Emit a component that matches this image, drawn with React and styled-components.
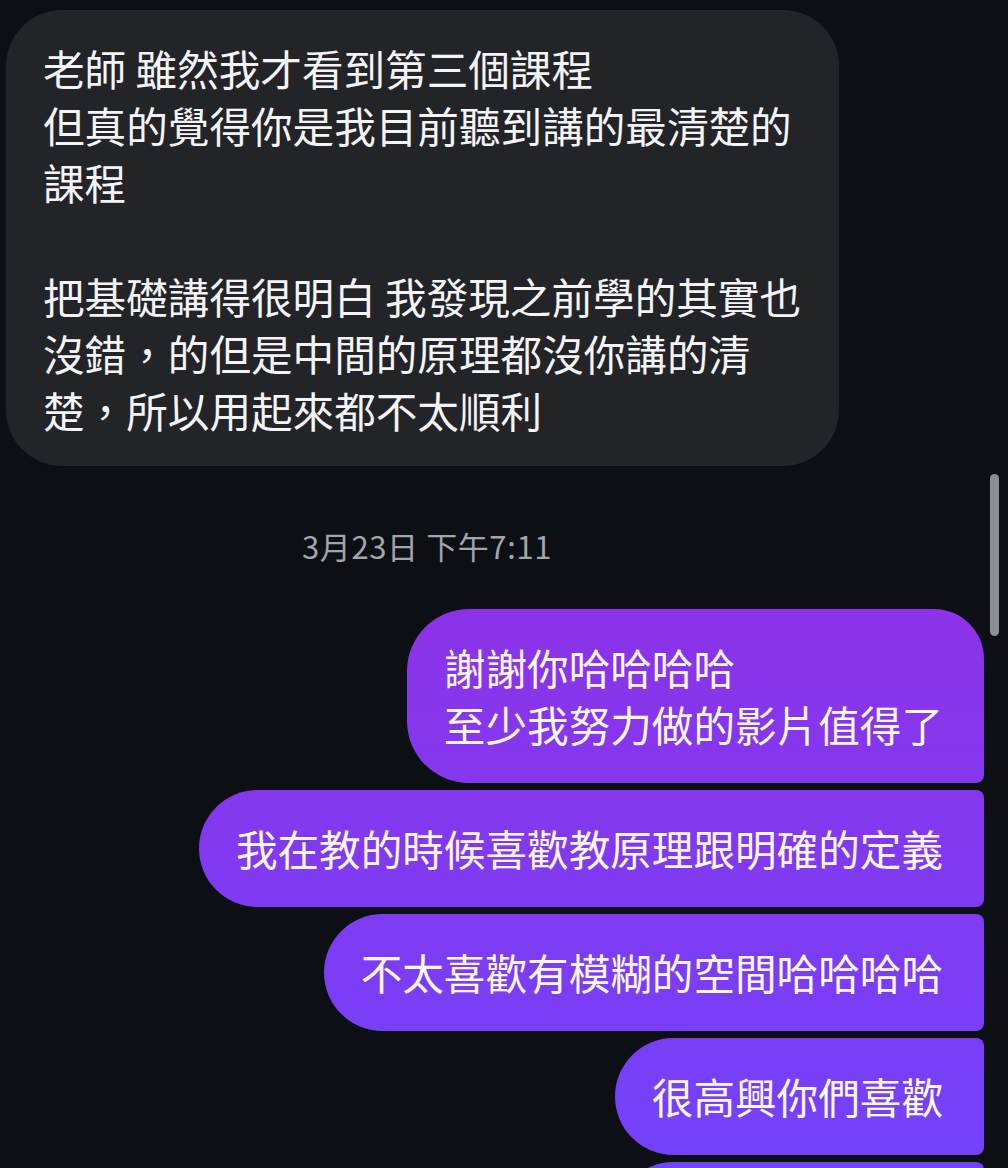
import styled, { createGlobalStyle } from 'styled-components';

const GlobalStyle = createGlobalStyle`
  html, body {
    margin: 0;
    padding: 0;
    background: #0c0f14;
    height: 1168px;
    overflow: hidden;
  }
  body {
    font-family: "Noto Sans CJK TC", "Noto Sans", sans-serif;
  }
`;

const incoming = [
  '老師 雖然我才看到第三個課程\n但真的覺得你是我目前聽到講的最清楚的\n課程\n\n把基礎講得很明白 我發現之前學的其實也\n沒錯，的但是中間的原理都沒你講的清\n楚，所以用起來都不太順利',
];

const outgoing = [
  {text: '謝謝你哈哈哈哈\n至少我努力做的影片值得了', first: true},
  {text: '我在教的時候喜歡教原理跟明確的定義'},
  {text: '不太喜歡有模糊的空間哈哈哈哈'},
  {text: '很高興你們喜歡'},
  {text: '我會繼續努力的'},
];

const App = () => {
  return (
    <Screen>
      <GlobalStyle />
      <Thread>
        {incoming.map((msg, i) => (
          <Received key={i}>{msg}</Received>
        ))}
        <Timestamp>3月23日 下午7:11</Timestamp>
        <SentGroup>
          {outgoing.map((msg, i) => (
            <Sent key={i} $first={msg.first}>{msg.text}</Sent>
          ))}
        </SentGroup>
      </Thread>
      <ScrollThumb />
    </Screen>
  );
};

const Screen = styled.div`
  position: relative;
  width: 1008px;
  height: 1168px;
  overflow: hidden;
  background: #0c0f14;
`;

const Thread = styled.div`
  display: flex;
  flex-direction: column;
  padding: 10px 24px 0 6px;
`;

const Received = styled.div`
  align-self: flex-start;
  background: #232428;
  color: #f4f4f6;
  border-radius: 56px;
  padding: 30px 38px 27px 37px;
  font-size: 41.6px;
  line-height: 57px;
  white-space: pre;
`;

const Timestamp = styled.div`
  margin: 61px 0 44px 296px;
  color: #a2a5ab;
  font-size: 31px;
  letter-spacing: 0.6px;
  line-height: 38px;
`;

const SentGroup = styled.div`
  display: flex;
  flex-direction: column;
  align-items: flex-end;
  gap: 7px;
`;

const Sent = styled.div`
  background: linear-gradient(180deg, #a02bd9 0px, #8b33e8 620px, #7342fb 1168px);
  background-attachment: fixed;
  color: #fbf8ff;
  border-radius: ${p => (p.$first ? '62px 50px 8px 62px' : '60px 8px 8px 60px')};
  padding: 30px 41px 30px 37px;
  font-size: 41.6px;
  line-height: 57px;
  white-space: pre;
`;

const ScrollThumb = styled.div`
  position: absolute;
  left: 990px;
  top: 474px;
  width: 9px;
  height: 162px;
  border-radius: 5px;
  background: #8d8e93;
`;

export default App;
